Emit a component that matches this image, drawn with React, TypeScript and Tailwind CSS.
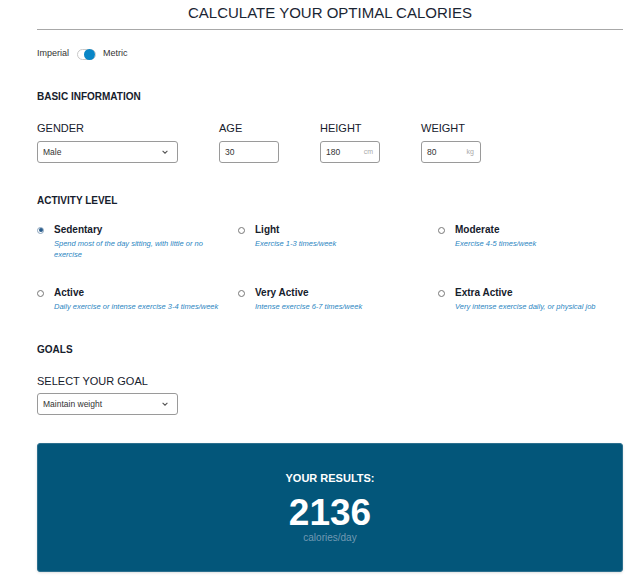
import { useState } from 'react';

const activities = [
  { name: 'Sedentary', desc: 'Spend most of the day sitting, with little or no exercise' },
  { name: 'Light', desc: 'Exercise 1-3 times/week' },
  { name: 'Moderate', desc: 'Exercise 4-5 times/week' },
  { name: 'Active', desc: 'Daily exercise or intense exercise 3-4 times/week' },
  { name: 'Very Active', desc: 'Intense exercise 6-7 times/week' },
  { name: 'Extra Active', desc: 'Very intense exercise daily, or physical job' },
];

function Chevron() {
  return (
    <svg width="8" height="8" viewBox="0 0 10 10" fill="none" stroke="#555" strokeWidth="1.3">
      <path d="M2 3.5 L5 6.5 L8 3.5" />
    </svg>
  );
}

function Select({ value }: { value: string }) {
  return (
    <div className="w-[141px] h-[22px] border border-[#9a9a9a] rounded-[3px] flex items-center justify-between pl-[5px] pr-[8px] text-[8.5px] text-[#333]">
      <span>{value}</span>
      <Chevron />
    </div>
  );
}

function NumInput({ value, unit }: { value: string; unit?: string }) {
  return (
    <div className="w-[60px] h-[22px] border border-[#9a9a9a] rounded-[3px] flex items-center justify-between pl-[5px] pr-[6px] text-[8.5px] text-[#333]">
      <span>{value}</span>
      {unit && <span className="text-[7px] text-[#aaa]">{unit}</span>}
    </div>
  );
}

export default function App() {
  const [selected, setSelected] = useState('Sedentary');

  return (
    <div className="w-[644px] h-[585px] bg-white text-[#16202c] overflow-hidden" style={{ fontFamily: '"Liberation Sans", Arial, sans-serif' }}>
      <div className="ml-[37px] w-[586px]">
        <h1 className="pt-[3px] pb-[6px] leading-[20px] text-[15px] text-center text-[#1a2533] border-b border-[#a8a8a8]">
          CALCULATE YOUR OPTIMAL CALORIES
        </h1>

        <div className="mt-[17px] h-[14px] flex items-center text-[9px] text-[#333]">
          <span>Imperial</span>
          <div className="ml-[8px] w-[19px] h-[11px] rounded-full border border-[#c8c8c8] bg-white flex items-center justify-end">
            <div className="w-[11px] h-[11px] rounded-full bg-[#0a86c6]" />
          </div>
          <span className="ml-[7px]">Metric</span>
        </div>

        <h2 className="mt-[29px] text-[10px] leading-[14px] font-bold">BASIC INFORMATION</h2>

        <div className="mt-[16px] flex gap-[41px]">
          <div>
            <div className="text-[11px] leading-[16px]">GENDER</div>
            <div className="mt-[5px]"><Select value="Male" /></div>
          </div>
          <div>
            <div className="text-[11px] leading-[16px]">AGE</div>
            <div className="mt-[5px]"><NumInput value="30" /></div>
          </div>
          <div>
            <div className="text-[11px] leading-[16px]">HEIGHT</div>
            <div className="mt-[5px]"><NumInput value="180" unit="cm" /></div>
          </div>
          <div>
            <div className="text-[11px] leading-[16px]">WEIGHT</div>
            <div className="mt-[5px]"><NumInput value="80" unit="kg" /></div>
          </div>
        </div>

        <h2 className="mt-[31px] text-[10px] leading-[14px] font-bold">ACTIVITY LEVEL</h2>

        <div className="mt-[15px] grid grid-cols-[201px_200px_185px] gap-y-[26px]">
          {activities.map((a) => {
            const on = a.name === selected;
            return (
              <button key={a.name} onClick={() => setSelected(a.name)} className="w-full flex items-start justify-start text-left">
                <div className="w-[17px] h-[14px] shrink-0 flex items-center">
                  <div className={`w-[7px] h-[7px] rounded-full border flex items-center justify-center ${on ? 'border-[#8aa4bd]' : 'border-[#777]'}`}>
                    {on && <div className="w-[4px] h-[4px] rounded-full bg-[#2a5d8c]" />}
                  </div>
                </div>
                <div className="min-w-0 flex-1 max-w-[172px]">
                  <div className="text-[10px] leading-[14px] font-bold text-[#16202c]">{a.name}</div>
                  <div className="mt-[1px] text-[7.5px] leading-[11px] italic text-[#2a85bf]">{a.desc}</div>
                </div>
              </button>
            );
          })}
        </div>

        <h2 className="mt-[31px] text-[10px] leading-[14px] font-bold">GOALS</h2>

        <div className="mt-[16px] text-[11px] leading-[16px]">SELECT YOUR GOAL</div>
        <div className="mt-[4px]"><Select value="Maintain weight" /></div>

        <div className="mt-[28px] h-[129px] bg-[#03567a] rounded-[3px] border border-[#2b6f8e] shadow-sm flex flex-col items-center text-white">
          <div className="mt-[27px] text-[11px] leading-[14px] font-bold">YOUR RESULTS:</div>
          <div className="mt-[10px] text-[37px] leading-[36px] font-bold">2136</div>
          <div className="mt-[1px] text-[10px] leading-[12px] text-[#7199b3]">calories/day</div>
        </div>
      </div>
    </div>
  );
}
